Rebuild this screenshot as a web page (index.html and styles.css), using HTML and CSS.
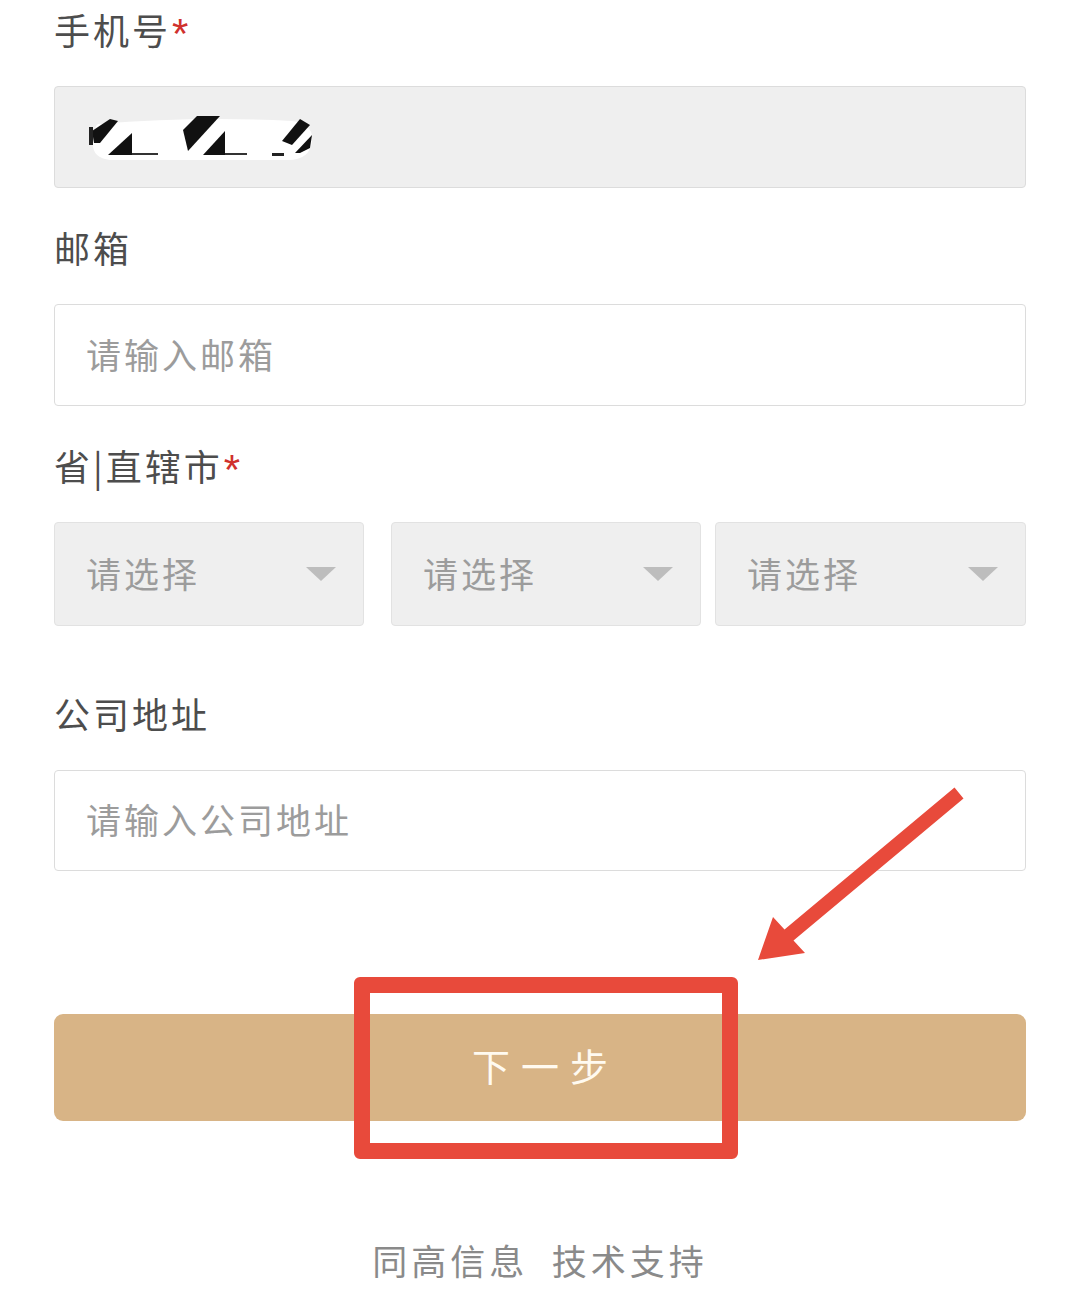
FILE: index.html
```html
<!DOCTYPE html>
<html lang="zh-CN">
<head>
    <meta charset="UTF-8">
    <meta name="viewport" content="width=device-width, initial-scale=1.0">
    <title>注册信息</title>
    <link rel="stylesheet" href="styles.css">
</head>
<body>
<div class="page">
    <form class="form">
        <!-- 手机号 -->
        <label class="label">手机号<span class="req">*</span></label>
        <div class="input input-readonly">
            <svg class="mask" width="226" height="46" viewBox="0 0 226 46">
                <path d="M10 9 Q 110 1 204 6 Q 226 9 224 26 Q 222 45 200 45 L 22 45 Q 3 43 5 26 Q 6 11 10 9 Z" fill="#fff"/>
                <polygon points="4,16 22,4 30,6 12,28 6,28" fill="#111"/>
                <rect x="1" y="12" width="4" height="18" fill="#222"/>
                <polygon points="20,40 44,18 44,40" fill="#111"/>
                <rect x="44" y="38" width="26" height="2" fill="#333"/>
                <polygon points="95,15 109,1 132,1 100,36" fill="#111"/>
                <polygon points="115,40 137,16 137,40" fill="#111"/>
                <rect x="137" y="38" width="22" height="2" fill="#333"/>
                <polygon points="194,26 212,4 222,10 204,30" fill="#111"/>
                <polygon points="207,38 224,20 222,33 212,38" fill="#111"/>
                <rect x="184" y="38" width="12" height="3" fill="#222"/>
            </svg>
        </div>

        <!-- 邮箱 -->
        <label class="label">邮箱</label>
        <input class="input" type="text" placeholder="请输入邮箱">

        <!-- 省市区 -->
        <label class="label">省|直辖市<span class="req">*</span></label>
        <div class="selects">
            <div class="select">请选择<i class="caret"></i></div>
            <div class="select">请选择<i class="caret"></i></div>
            <div class="select">请选择<i class="caret"></i></div>
        </div>

        <!-- 公司地址 -->
        <label class="label">公司地址</label>
        <input class="input" type="text" placeholder="请输入公司地址">

        <button class="btn-next" type="button">下一步</button>

        <div class="footer">同高信息&nbsp;&nbsp;技术支持</div>
    </form>

    <!-- 标注 -->
    <div class="mark-box"></div>
    <svg class="mark-arrow" width="1080" height="1309" viewBox="0 0 1080 1309">
        <polygon points="758,960 773,917 784.5,929.6 954.5,787.6 963.5,798.4 793.5,940.4 805,953" fill="#e84a3b"/>
    </svg>
</div>
</body>
</html>
```

FILE: styles.css
```css
body {
    margin: 0;
    background-color: #fff;
    font-family: "Noto Sans CJK SC", sans-serif;
}

.page {
    position: relative;
    width: 1080px;
    height: 1309px;
    overflow: hidden;
}

.form {
    padding: 4px 54px 0;
}

.label {
    display: block;
    height: 50px;
    font-size: 36px;
    line-height: 50px;
    letter-spacing: 3px;
    color: #4d4d4d;
    margin-bottom: 32px;
}

.req {
    color: #d0312d;
    font-family: "Liberation Sans", sans-serif;
    font-size: 42px;
    line-height: 0;
    vertical-align: -3px;
    margin-left: 1px;
}

.input {
    display: block;
    width: 100%;
    height: 102px;
    box-sizing: border-box;
    border: 1px solid #dcdcdc;
    border-radius: 4px;
    background-color: #fff;
    padding: 0 31px 4px;
    font-family: inherit;
    font-size: 35px;
    letter-spacing: 3px;
    color: #333;
    outline: none;
    margin: 0 0 34px;
}

.input::placeholder {
    color: #9c9c9c;
}

.input-readonly {
    display: flex;
    align-items: center;
    background-color: #efefef;
    padding: 0 0 0 33px;
}

.mask {
    display: block;
    margin-top: 2px;
}

/* 三个下拉框 */
.selects {
    display: flex;
    margin-bottom: 62px;
}

.select {
    width: 310px;
    height: 104px;
    box-sizing: border-box;
    display: flex;
    align-items: center;
    justify-content: space-between;
    padding: 0 27px 4px 31px;
    background-color: #efefef;
    border: 1px solid #e2e2e2;
    border-radius: 4px;
    font-size: 35px;
    letter-spacing: 3px;
    color: #9c9c9c;
}

.select:first-child {
    margin-right: 27px;
}

.select:nth-child(2) {
    margin-right: 14px;
}

.select:last-child {
    width: 311px;
}

.caret {
    width: 0;
    height: 0;
    margin-top: 4px;
    border-left: 15px solid transparent;
    border-right: 15px solid transparent;
    border-top: 14px solid #bdbdbd;
}

.selects + .label + .input {
    margin-bottom: 0;
    height: 101px;
}

.btn-next {
    display: block;
    width: 100%;
    height: 107px;
    margin-top: 143px;
    border: none;
    border-radius: 9px;
    background-color: #d8b486;
    color: #fffaf0;
    font-family: inherit;
    font-size: 38px;
    letter-spacing: 11px;
    padding: 0 0 6px 11px;
    cursor: pointer;
}

.footer {
    margin-top: 114px;
    text-align: center;
    font-size: 35px;
    line-height: 50px;
    letter-spacing: 4px;
    color: #8a8a8a;
}

/* 红色标注框和箭头 */
.mark-box {
    position: absolute;
    left: 354px;
    top: 977px;
    width: 384px;
    height: 182px;
    box-sizing: border-box;
    border: 16px solid #e84a3b;
    border-radius: 6px;
}

.mark-arrow {
    position: absolute;
    left: 0;
    top: 0;
    pointer-events: none;
}
```
